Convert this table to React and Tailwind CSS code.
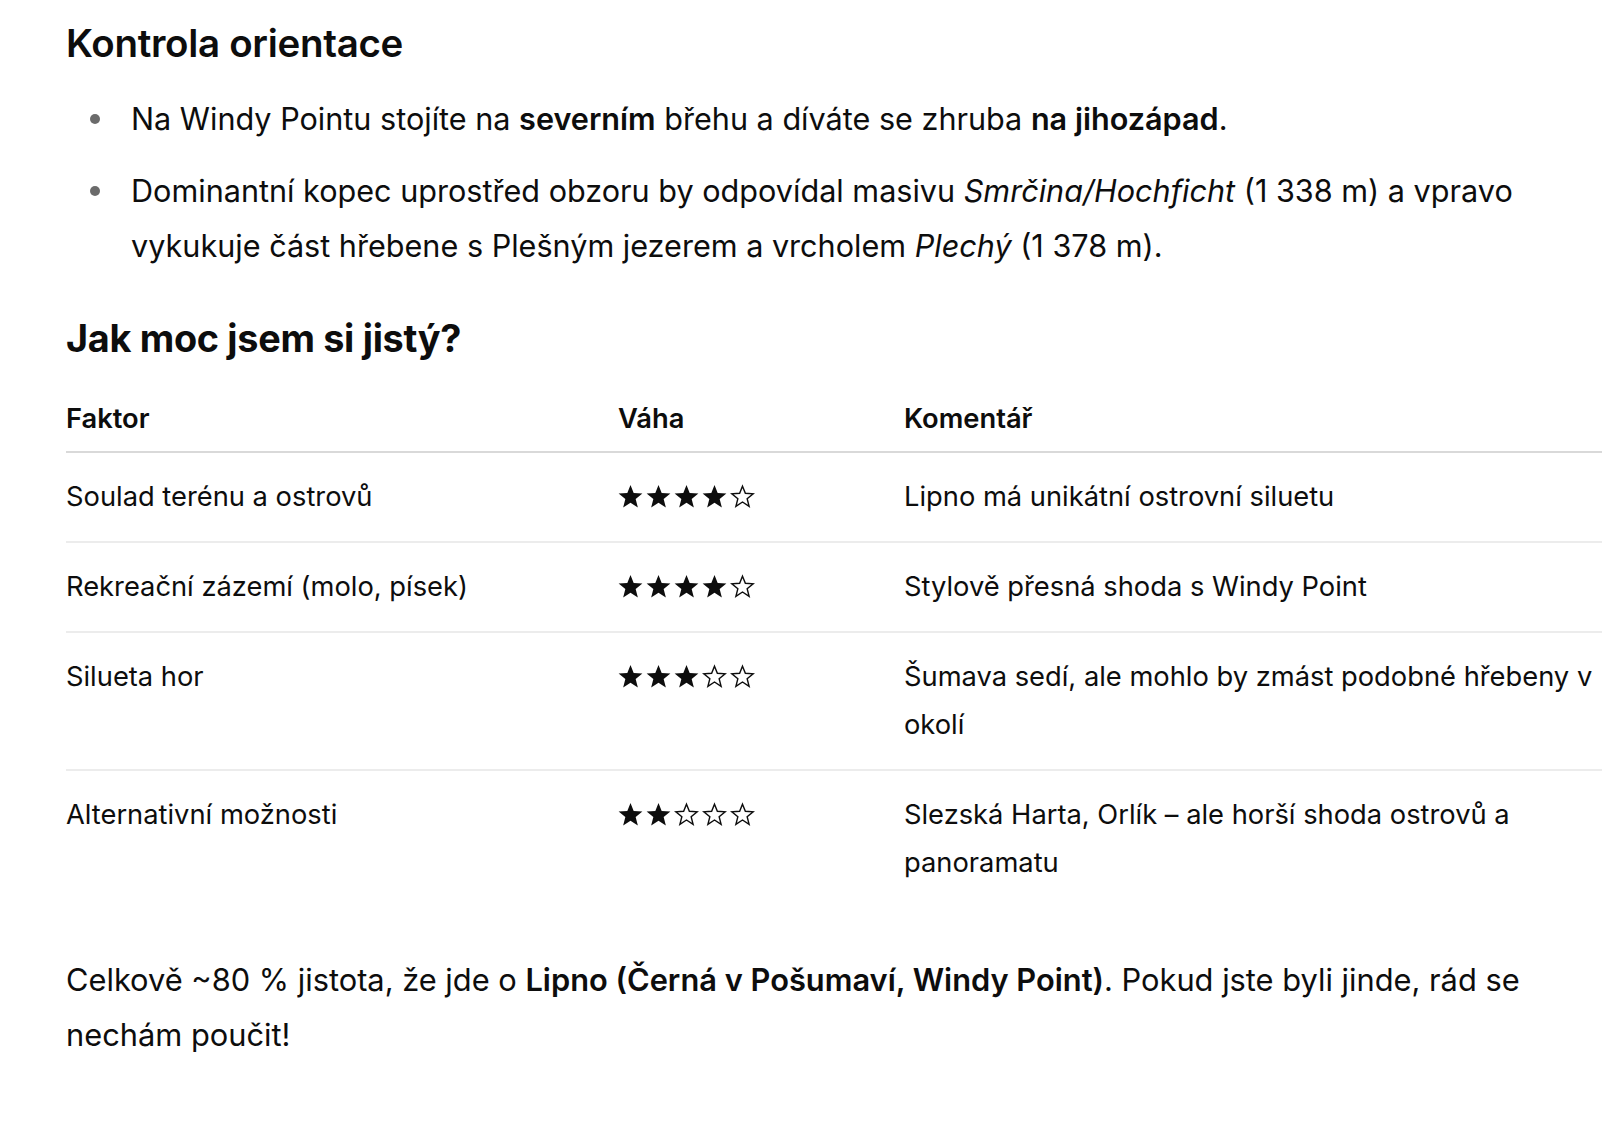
import React from "react";

const STAR = "M12 1 L15.05 8.6 L23.4 9.1 L16.95 14.35 L19.05 22.5 L12 17.9 L4.95 22.5 L7.05 14.35 L0.6 9.1 L8.95 8.6 Z";

function Stars({ n }) {
  return (
    <div className="flex h-[48px] items-center gap-[3px]">
      {[0, 1, 2, 3, 4].map((i) => (
        <svg key={i} width="25" height="25" viewBox="0 0 24 24">
          {i < n ? (
            <path d={STAR} fill="#0d0d0d" />
          ) : (
            <path d={STAR} fill="none" stroke="#0d0d0d" strokeWidth="1.5" strokeLinejoin="miter" transform="translate(1.2 1.2) scale(0.9)" />
          )}
        </svg>
      ))}
    </div>
  );
}

function Bullet({ children, className }) {
  return (
    <li className={"flex items-start " + (className || "")}>
      <span className="w-[65px] shrink-0">
        <span className="ml-[24px] mt-[23px] block h-[10px] w-[10px] rounded-full bg-[#6b6b6b]" />
      </span>
      <span className="block whitespace-nowrap">{children}</span>
    </li>
  );
}

const rows = [
  { f: "Soulad terénu a ostrovů", s: 4, c: <>Lipno má unikátní ostrovní siluetu</> },
  { f: "Rekreační zázemí (molo, písek)", s: 4, c: <>Stylově přesná shoda s Windy Point</> },
  { f: "Silueta hor", s: 3, c: <>Šumava sedí, ale mohlo by zmást podobné hřebeny v<br />okolí</> },
  { f: "Alternativní možnosti", s: 2, c: <>Slezská Harta, Orlík – ale horší shoda ostrovů a<br />panoramatu</> },
];

export default function App() {
  return (
    <div className="min-h-screen w-[1608px] bg-white pl-[66px] pr-[6px] pt-[19px] font-[Inter,sans-serif] text-[#0d0d0d]">
      <h3 className="text-[38.5px] font-semibold leading-[48px] tracking-[-0.3px]">Kontrola orientace</h3>

      <ul className="mt-[24px] text-[30.6px] leading-[55px]">
        <Bullet>
          Na Windy Pointu stojíte na <strong className="font-semibold">severním</strong> břehu a díváte se zhruba{" "}
          <strong className="font-semibold">na jihozápad</strong>.
        </Bullet>
        <Bullet className="mt-[17px]">
          Dominantní kopec uprostřed obzoru by odpovídal masivu <em>Smrčina/Hochficht</em> (1&nbsp;338&nbsp;m) a vpravo
          <br />
          vykukuje část hřebene s Plešným jezerem a vrcholem <em>Plechý</em> (1&nbsp;378&nbsp;m).
        </Bullet>
      </ul>

      <h3 className="mt-[41px] text-[37.8px] font-bold leading-[48px] tracking-[-0.3px]">Jak moc jsem si jistý?</h3>

      <table className="mt-[33px] w-full table-fixed border-collapse text-left text-[27.3px] leading-[48px]">
        <colgroup>
          <col className="w-[536px]" />
          <col className="w-[286px]" />
          <col />
        </colgroup>
        <thead>
          <tr>
            <th className="border-b-2 border-[#d9d9d9] pb-[8px] pl-0 pr-[16px] pt-0 font-semibold">Faktor</th>
            <th className="border-b-2 border-[#d9d9d9] pb-[8px] px-[16px] pt-0 font-semibold">Váha</th>
            <th className="border-b-2 border-[#d9d9d9] pb-[8px] pl-[16px] pr-0 pt-0 font-semibold">Komentář</th>
          </tr>
        </thead>
        <tbody>
          {rows.map((r, i) => {
            const b = i < rows.length - 1 ? "border-b-2 border-[#ececec]" : "";
            return (
              <tr key={i}>
                <td className={"pb-[20px] pl-0 pr-[16px] pt-[20px] align-top " + b}>{r.f}</td>
                <td className={"pb-[20px] px-[16px] pt-[20px] align-top " + b}>
                  <div className="-mt-[1px]">
                    <Stars n={r.s} />
                  </div>
                </td>
                <td className={"whitespace-nowrap pb-[20px] pl-[16px] pr-0 pt-[20px] align-top " + b}>{r.c}</td>
              </tr>
            );
          })}
        </tbody>
      </table>

      <p className="mt-[45px] whitespace-nowrap text-[30.8px] leading-[55px]">
        Celkově ~80&nbsp;% jistota, že jde o <strong className="font-semibold">Lipno (Černá v Pošumaví, Windy Point)</strong>. Pokud jste byli jinde, rád se
        <br />
        nechám poučit!
      </p>
    </div>
  );
}
